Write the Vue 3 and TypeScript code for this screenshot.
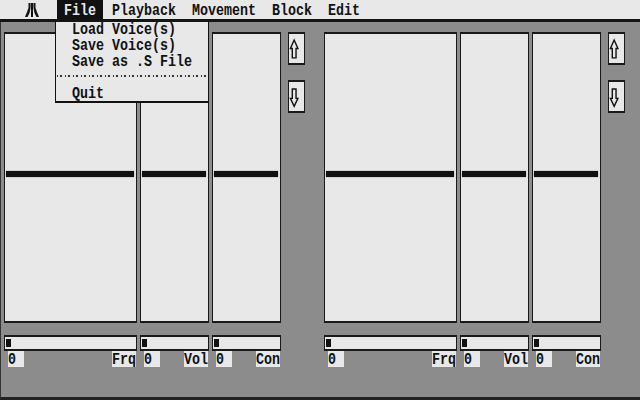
<script setup lang="ts">
interface Strip { cls: string; label: string }
const strips: Strip[] = [
  { cls: 'wide', label: 'Frq' },
  { cls: 'narrow', label: 'Vol' },
  { cls: 'narrow', label: 'Con' },
]
const groups = [0, 1]
const menu = ['Playback', 'Movement', 'Block', 'Edit']
const before = ['Load Voice(s)', 'Save Voice(s)', 'Save as .S File']
</script>

<template>
  <div class="screen">
    <header class="bar">
      <svg class="logo" width="16" height="16" viewBox="0 0 16 16">
        <path d="M7 1h2v14H7zM4.500 1h2v5L5.500 11l-2 4H1l2-5 1.500-4zM9.500 1h2v5l1.500 4 2 5h-2.500l-2-4-1-5z" fill="#111" />
      </svg>
      <span class="item active"><span class="txt">File</span></span>
      <span v-for="m in menu" :key="m" class="item"><span class="txt">{{ m }}</span></span>
    </header>
    <div class="dropdown">
      <div v-for="e in before" :key="e" class="entry"><span class="txt">{{ e }}</span></div>
      <div class="sep"></div>
      <div class="entry"><span class="txt">Quit</span></div>
    </div>
    <main class="desk">
      <section v-for="g in groups" :key="g" class="group">
        <div class="columns">
          <div v-for="s in strips" :key="s.label" class="col" :class="s.cls">
            <div class="track"><div class="level"></div></div>
            <div class="slider"><div class="thumb"></div></div>
            <div class="labels">
              <span class="lab zero"><span class="txt">0</span></span>
              <span class="lab"><span class="txt">{{ s.label }}</span></span>
            </div>
          </div>
        </div>
        <div class="arrows">
          <button class="arrow">
            <svg width="16" height="29" viewBox="0 0 16 29">
              <path d="M5.500 5.500L9.500 14.500H7.500V24.500H3.500V14.500H1.500Z" fill="#e8e8e8" stroke="#111" stroke-width="1.500" />
            </svg>
          </button>
          <button class="arrow">
            <svg width="16" height="29" viewBox="0 0 16 29">
              <path d="M3.500 6.500H7.500V16.500H9.500L5.500 25L1.500 16.500H3.500Z" fill="#e8e8e8" stroke="#111" stroke-width="1.500" />
            </svg>
          </button>
        </div>
      </section>
    </main>
  </div>
</template>

<style>
html, body { margin: 0; background: #8c8c8c; }
</style>

<style scoped>
* { box-sizing: border-box; }
.screen {
  position: relative;
  width: 640px;
  height: 400px;
  overflow: hidden;
  background: #8c8c8c;
  font-family: "Liberation Mono", monospace;
  font-size: 13.33px;
  font-weight: 700;
  color: #111;
  display: flex;
  flex-direction: column;
}
.txt {
  display: inline-block;
  line-height: 12px;
  transform: scaleY(1.3);
  transform-origin: 50% 50%;
  white-space: pre;
}
.bar {
  height: 22px;
  flex: none;
  background: #e8e8e8;
  border-bottom: 3px solid #141414;
  display: flex;
  align-items: stretch;
  padding-left: 24px;
  line-height: 21px;
}
.logo { margin: 2px 16px 0 0; flex: none; }
.item { padding: 0 8px; white-space: pre; }
.active { background: #111; color: #e8e8e8; padding: 0 7px; margin: 0 1px; }
.dropdown {
  position: absolute;
  left: 55px;
  top: 22px;
  width: 154px;
  height: 81px;
  background: #e8e8e8;
  border: 1px solid #111;
  border-top: 0;
  border-bottom-width: 2px;
  z-index: 2;
}
.entry {
  height: 16px;
  line-height: 16px;
  padding-left: 16px;
}
.sep {
  height: 2px;
  margin: 5px 1px 9px;
  background: repeating-linear-gradient(90deg, #333 0 1px, transparent 1px 3px, #333 3px 5px, transparent 5px 8px);
}
.desk {
  flex: 1;
  display: flex;
  gap: 19px;
  padding: 10px 0 0 3px;
  border-left: 1px solid #333;
  border-bottom: 3px solid #222;
}
.group { display: flex; gap: 7px; }
.columns { display: flex; gap: 3px; }
.col { display: flex; flex-direction: column; }
.wide { width: 133px; }
.narrow { width: 69px; }
.track {
  height: 291px;
  background: #e8e8e8;
  border: 1px solid #1a1a1a;
  border-width: 2px 1px;
  display: flex;
  align-items: center;
  padding: 0 2px 0 1px;
}
.level {
  flex: 1;
  height: 6px;
  background: #111;
  box-shadow: 0 0 1px #666;
  margin-top: -7px;
}
.slider {
  margin-top: 12px;
  height: 16px;
  background: #e8e8e8;
  border: 1px solid #1a1a1a;
  border-width: 2px 1px;
  padding: 2px 1px;
  display: flex;
}
.thumb { width: 5px; height: 8px; background: #111; }
.labels {
  display: flex;
  justify-content: space-between;
  padding: 0 1px 0 4px;
}
.lab {
  background: #e8e8e8;
  height: 16px;
  line-height: 17px;
  white-space: pre;
}
.zero { width: 16px; }
.arrows { display: flex; flex-direction: column; gap: 15px; }
.arrow {
  width: 17px;
  height: 33px;
  padding: 0;
  background: #e8e8e8;
  border: 1px solid #1a1a1a;
  border-width: 2px 1px;
  display: flex;
  align-items: center;
  justify-content: flex-start;
}
</style>
